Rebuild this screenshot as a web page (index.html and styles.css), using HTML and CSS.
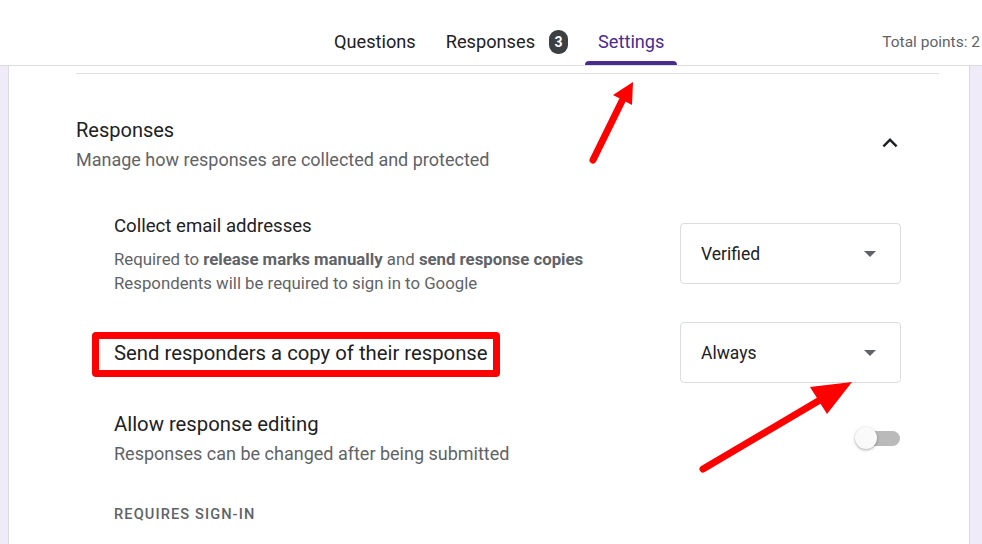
FILE: index.html
```html
<!DOCTYPE html>
<html lang="en">
<head>
<meta charset="utf-8">
<title>Settings</title>
<link rel="stylesheet" href="styles.css">
</head>
<body>
<header class="topbar">
  <nav class="tabs">
    <div class="tab">Questions</div>
    <div class="tab">Responses<span class="badge">3</span></div>
    <div class="tab active">Settings</div>
  </nav>
  <div class="points">Total points: 2</div>
</header>
<main class="page">
  <section class="card">
    <hr class="rule">
    <div class="section-head">
      <div class="section-text">
        <h2 class="section-title">Responses</h2>
        <p class="section-sub">Manage how responses are collected and protected</p>
      </div>
      <div class="collapse">
        <svg viewBox="0 0 24 24" width="30" height="30"><path d="M7.41 15.41L12 10.83l4.59 4.58L18 14l-6-6-6 6z" fill="#202124"/></svg>
      </div>
    </div>
    <div class="items">
      <div class="item">
        <div class="item-text">
          <div class="item-title compact">Collect email addresses</div>
          <div class="item-desc compact">Required to <b>release marks manually</b> and <b>send response copies</b><br>Respondents will be required to sign in to Google</div>
        </div>
        <div class="select"><span>Verified</span><span class="caret"></span></div>
      </div>
      <div class="item">
        <div class="item-text">
          <div class="item-title"><span class="marked">Send responders a copy of their response</span></div>
        </div>
        <div class="select"><span>Always</span><span class="caret"></span></div>
      </div>
      <div class="item">
        <div class="item-text">
          <div class="item-title">Allow response editing</div>
          <div class="item-desc">Responses can be changed after being submitted</div>
        </div>
        <div class="toggle"><span class="track"></span><span class="knob"></span></div>
      </div>
    </div>
    <div class="group-label">REQUIRES SIGN-IN</div>
  </section>
</main>
<svg class="annotations" viewBox="0 0 982 544" width="982" height="544">
  <line x1="593" y1="160" x2="622" y2="101" stroke="#ff0000" stroke-width="7" stroke-linecap="round"/>
  <polygon points="633,82 613,95 632,105" fill="#ff0000"/>
  <line x1="703" y1="469" x2="820" y2="400" stroke="#ff0000" stroke-width="7" stroke-linecap="round"/>
  <polygon points="852,382 810,387 827,414" fill="#ff0000"/>
</svg>
</body>
</html>
```

FILE: styles.css
```css
* { box-sizing: border-box; }

html, body {
  margin: 0;
  padding: 0;
}

body {
  width: 982px;
  height: 544px;
  overflow: hidden;
  position: relative;
  font-family: Roboto, "Liberation Sans", Arial, sans-serif;
  color: #202124;
  background: #fff;
}

.topbar {
  display: flex;
  align-items: flex-end;
  height: 66px;
  border-bottom: 1px solid #dadce0;
  background: #fff;
}

.tabs {
  display: flex;
  gap: 4px;
  margin-left: 321px;
}

.tab {
  position: relative;
  display: flex;
  align-items: center;
  padding: 13px 13px 11px;
  height: 48px;
  font-size: 18.2px;
  line-height: 24px;
  color: #202124;
}

.tab.active {
  color: #4a2b8e;
}

.tab.active::after {
  content: "";
  position: absolute;
  left: 0;
  right: 0;
  bottom: 0;
  height: 4px;
  border-radius: 4px 4px 0 0;
  background: #4a2b8e;
}

.badge {
  display: inline-flex;
  align-items: center;
  justify-content: center;
  width: 19px;
  height: 24px;
  margin-left: 14px;
  border-radius: 9px;
  background: #3c4043;
  color: #fff;
  font-size: 14px;
  font-weight: 700;
}

.points {
  margin-left: auto;
  padding: 0 2px 11px 0;
  font-size: 15.5px;
  line-height: 24px;
  color: #5f6368;
}

.page {
  background: #f0ebf8;
  padding: 0 12px 0 8px;
  height: 478px;
}

.card {
  background: #fff;
  border-left: 1px solid #dadce0;
  border-right: 1px solid #dadce0;
  padding: 7px 31px 200px 67px;
  height: 100%;
}

.rule {
  margin: 0 -1px 0 0;
  border: 0;
  height: 1px;
  background: #e0e0e0;
}

.section-head {
  display: flex;
  align-items: center;
  justify-content: space-between;
  margin-top: 42px;
}

.section-title {
  margin: 0;
  font-size: 20px;
  font-weight: 400;
  line-height: 28px;
  color: #202124;
}

.section-sub {
  margin: 4px 0 0;
  font-size: 18px;
  line-height: 24px;
  color: #5f6368;
}

.collapse {
  width: 48px;
  height: 48px;
  margin-right: 24px;
  margin-top: -2px;
  display: flex;
  align-items: center;
  justify-content: center;
}

.items {
  display: flex;
  flex-direction: column;
  gap: 27px;
  margin-top: 40px;
  padding: 0 37px 0 38px;
}

.item {
  display: flex;
  align-items: center;
  justify-content: space-between;
}

.item-title {
  font-size: 20.3px;
  line-height: 28px;
  color: #202124;
}

.item-title.compact {
  font-size: 18.6px;
}

.item-desc {
  margin-top: 4px;
  font-size: 18px;
  line-height: 24px;
  color: #5f6368;
}

.item-desc.compact {
  margin-top: 7px;
  font-size: 16.8px;
}

.item-desc b {
  font-weight: 700;
}

.marked {
  position: relative;
}

.marked::before {
  content: "";
  position: absolute;
  left: -22px;
  right: -12px;
  top: -9px;
  bottom: -12px;
  border: 7px solid #ff0000;
  border-radius: 4px;
}

.select {
  flex-shrink: 0;
  display: flex;
  align-items: center;
  justify-content: space-between;
  width: 221px;
  height: 61px;
  padding: 0 24px 0 20px;
  border: 1px solid #dadce0;
  border-radius: 4px;
  font-size: 17.5px;
  color: #202124;
}

.caret {
  width: 0;
  height: 0;
  border-left: 6px solid transparent;
  border-right: 6px solid transparent;
  border-top: 6px solid #5f6368;
}

.toggle {
  position: relative;
  width: 45px;
  height: 24px;
  margin-right: 1px;
}

.track {
  position: absolute;
  left: 6px;
  right: 0;
  top: 5px;
  height: 15px;
  border-radius: 8px;
  background: #bababa;
}

.knob {
  position: absolute;
  left: 0;
  top: 1px;
  width: 22px;
  height: 22px;
  border-radius: 50%;
  background: #fafafa;
  box-shadow: 0 1px 3px rgba(0,0,0,0.35);
}

.group-label {
  margin: 38px 0 0 38px;
  font-size: 14.6px;
  line-height: 20px;
  font-weight: 500;
  letter-spacing: 1.1px;
  color: #5f6368;
}

.annotations {
  position: absolute;
  left: 0;
  top: 0;
  pointer-events: none;
}
```
